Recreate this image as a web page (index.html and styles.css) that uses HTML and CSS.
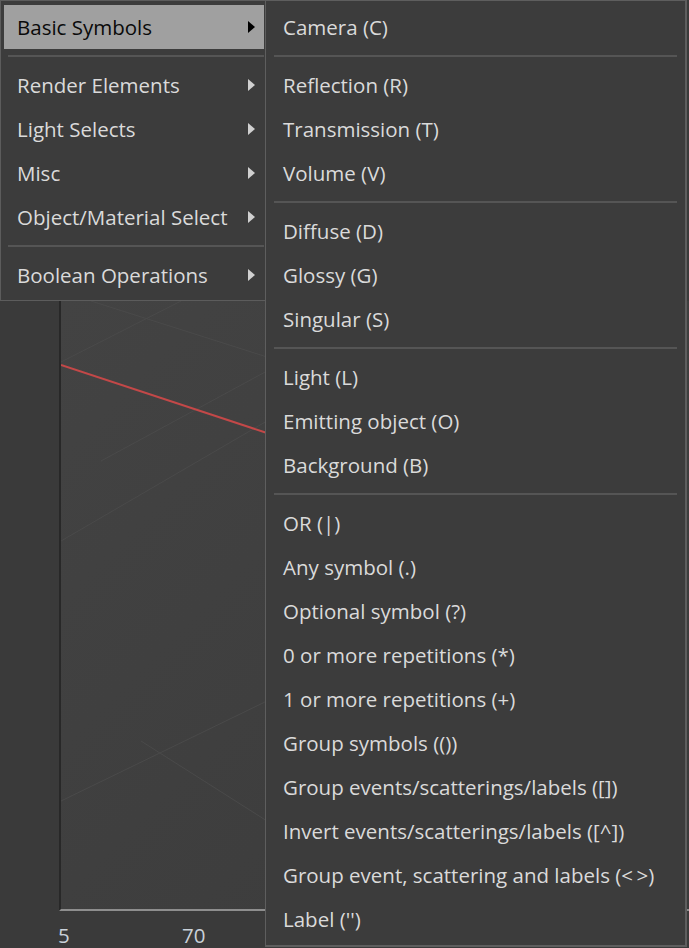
FILE: index.html
```html
<!DOCTYPE html>
<html>
<head>
<meta charset="utf-8">
<link rel="stylesheet" href="styles.css">
</head>
<body>
<div class="stage">
  <div class="gutter"></div>
  <div class="plot">
    <svg class="plot-svg" width="630" height="610" viewBox="0 0 630 610">
      <line x1="30" y1="0" x2="206" y2="56" class="grid"/>
      <line x1="0" y1="61" x2="120" y2="0" class="grid"/>
      <line x1="0" y1="240" x2="206" y2="120" class="grid"/>
      <line x1="40" y1="160" x2="206" y2="70" class="grid"/>
      <line x1="80" y1="440" x2="206" y2="520" class="grid"/>
      <line x1="0" y1="500" x2="206" y2="400" class="grid"/>
      <line x1="0" y1="64" x2="206" y2="132" class="red"/>
    </svg>
  </div>
  <div class="gutter"></div>
  <div class="ticks"><span class="tick t1">5</span><span class="tick t2">70</span></div>

  <div class="menu main">
    <div class="item active"><span>Basic Symbols</span><i class="arrow"></i></div>
    <div class="sep"></div>
    <div class="item"><span>Render Elements</span><i class="arrow"></i></div>
    <div class="item"><span>Light Selects</span><i class="arrow"></i></div>
    <div class="item"><span>Misc</span><i class="arrow"></i></div>
    <div class="item"><span>Object/Material Select</span><i class="arrow"></i></div>
    <div class="sep"></div>
    <div class="item"><span>Boolean Operations</span><i class="arrow"></i></div>
  </div>

  <div class="menu sub">
    <div class="item">Camera (C)</div>
    <div class="sep"></div>
    <div class="item">Reflection (R)</div>
    <div class="item">Transmission (T)</div>
    <div class="item">Volume (V)</div>
    <div class="sep"></div>
    <div class="item">Diffuse (D)</div>
    <div class="item">Glossy (G)</div>
    <div class="item">Singular (S)</div>
    <div class="sep"></div>
    <div class="item">Light (L)</div>
    <div class="item">Emitting object (O)</div>
    <div class="item">Background (B)</div>
    <div class="sep"></div>
    <div class="item">OR (|)</div>
    <div class="item">Any symbol (.)</div>
    <div class="item">Optional symbol (?)</div>
    <div class="item">0 or more repetitions (*)</div>
    <div class="item">1 or more repetitions (+)</div>
    <div class="item">Group symbols (())</div>
    <div class="item">Group events/scatterings/labels ([])</div>
    <div class="item">Invert events/scatterings/labels ([^])</div>
    <div class="item">Group event, scattering and labels (&lt;&thinsp;&gt;)</div>
    <div class="item">Label ('')</div>
  </div>
</div>
</body>
</html>
```

FILE: styles.css
```css
html, body {
  margin: 0;
  padding: 0;
  background: #3a3a3a;
}
body {
  font-family: "Open Sans", "Noto Sans", sans-serif;
  overflow: hidden;
}
.stage {
  position: relative;
  width: 689px;
  height: 948px;
  display: grid;
  grid-template-columns: 59px 1fr;
  grid-template-rows: 301px 610px 37px;
  background: #3a3a3a;
}
.stage > .gutter:first-child {
  grid-row: 1 / 3;
}
.plot {
  grid-column: 2;
  grid-row: 1 / 3;
  align-self: end;
  height: 610px;
  box-sizing: border-box;
  border-left: 2px solid #282828;
  border-bottom: 2px solid #8e8e8e;
  background: linear-gradient(135deg, #434343 0%, #3e3e3e 60%, #3a3a3a 100%);
  overflow: hidden;
}
.plot-svg { display: block; }
.grid { stroke: #4a4a4a; stroke-width: 1; }
.red { stroke: #c34848; stroke-width: 2; }
.ticks {
  grid-column: 1 / 3;
  grid-row: 3;
  position: relative;
  color: #c9d1d9;
  font-size: 20.5px;
}
.tick { position: absolute; top: 13px; line-height: 22px; }
.t1 { left: 58px; }
.t2 { left: 182px; }

.menu {
  position: absolute;
  top: 0;
  background: #3c3c3c;
  border: 1px solid #5c5c5c;
  box-sizing: border-box;
  color: #dadada;
  font-size: 20.5px;
}
.menu.main {
  left: 0;
  width: 268px;
  padding: 4px 3px 3px 3px;
}
.menu.sub {
  left: 265px;
  width: 422px;
  height: 947px;
  padding: 4px 0;
  border-width: 1px 2px 2px 1px;
  border-color: #5e5e5e;
}
.item {
  height: 44px;
  line-height: 44px;
  padding-left: 17px;
  white-space: nowrap;
  display: flex;
  align-items: center;
}
.main .item {
  padding-left: 13px;
  padding-right: 9px;
  justify-content: space-between;
}
.item.active {
  background: #a0a0a0;
  color: #0a0a0a;
}
.arrow {
  width: 0;
  height: 0;
  border-left: 7px solid #d0d0d0;
  border-top: 6px solid transparent;
  border-bottom: 6px solid transparent;
}
.active .arrow { border-left-color: #000; }
.sep {
  height: 2px;
  margin: 6px 8px;
  background: #555555;
}
.main .sep { margin: 6px 0 6px 4px; }
```
